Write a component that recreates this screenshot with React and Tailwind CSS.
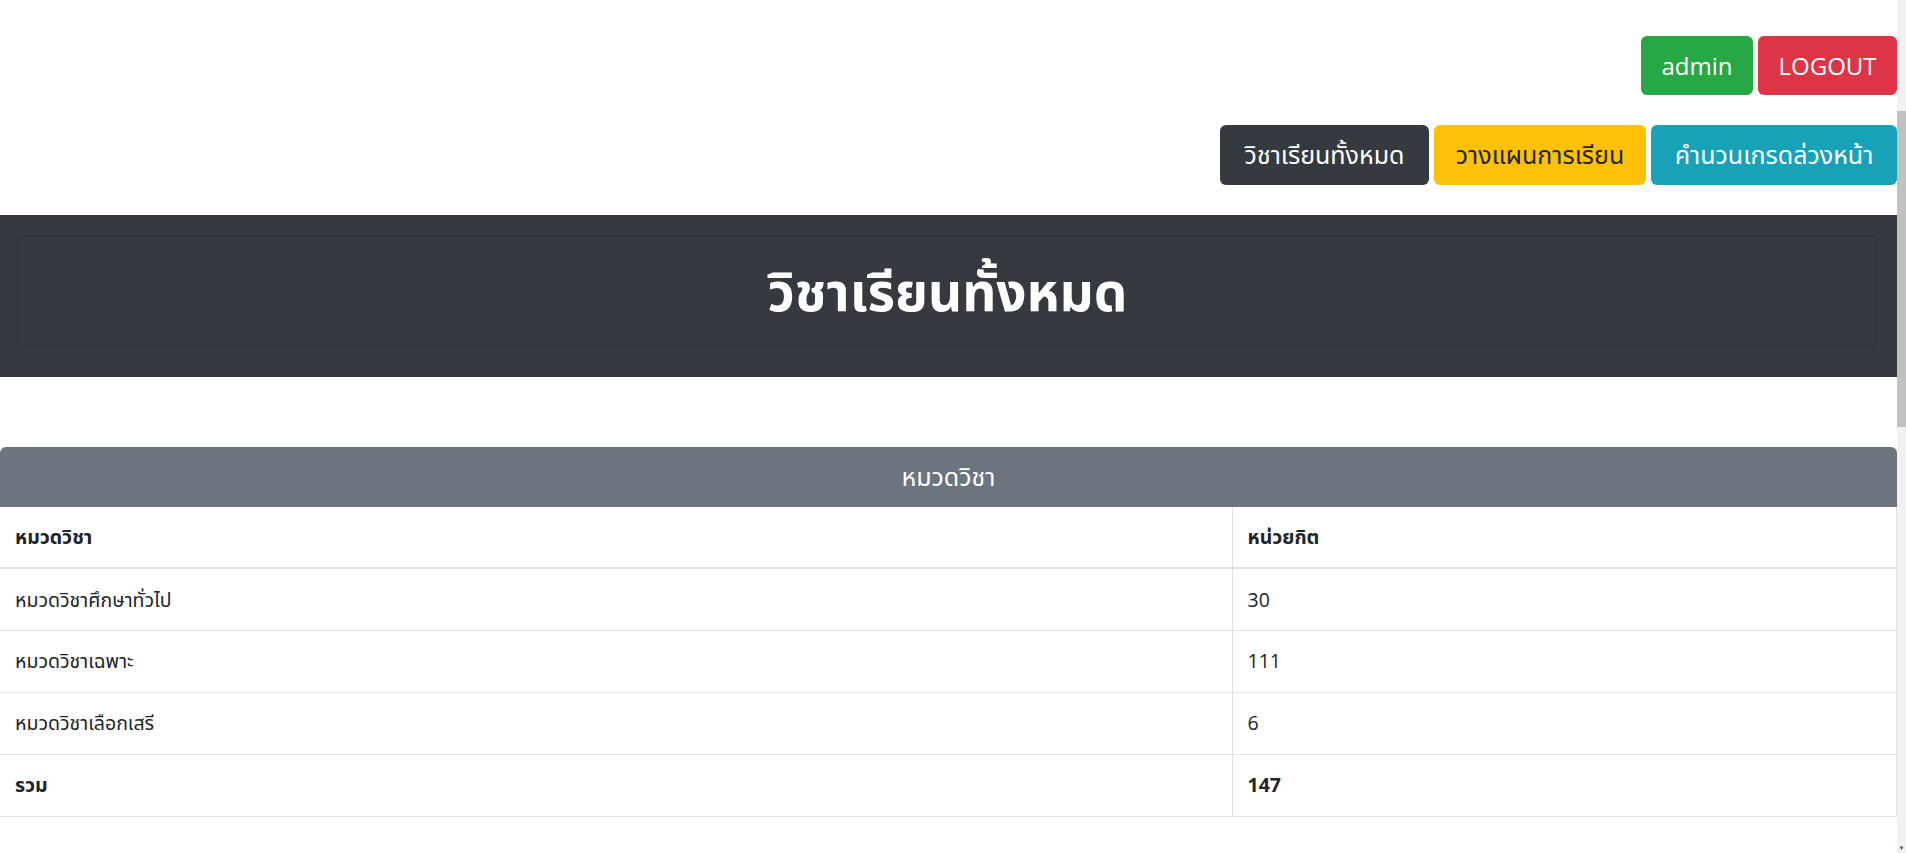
const rows = [
  { name: 'หมวดวิชาศึกษาทั่วไป', credit: '30' },
  { name: 'หมวดวิชาเฉพาะ', credit: '111' },
  { name: 'หมวดวิชาเลือกเสรี', credit: '6' },
];

const font = "font-['Open_Sans','Noto_Sans_Thai','Noto_Sans',sans-serif]";

export default function App() {
  return (
    <div className={`flex min-h-screen bg-white text-[#212529] ${font}`}>
      <div className="flex-1 min-w-0">
        {/* top user buttons */}
        <div className="flex justify-end gap-[5px] pt-[36px]">
          <button className="w-[112px] h-[59px] rounded-[6px] bg-[#28a745] text-white text-[24px]">admin</button>
          <button className="w-[139px] h-[59px] rounded-[6px] bg-[#dc3545] text-white text-[24px]">LOGOUT</button>
        </div>

        {/* navigation */}
        <div className="flex justify-end gap-[5px] mt-[30px]">
          <button className="w-[209px] h-[60px] rounded-[6px] bg-[#343a40] text-white text-[25px]">วิชาเรียนทั้งหมด</button>
          <button className="w-[212px] h-[60px] rounded-[6px] bg-[#ffc107] text-[#212529] text-[25px]">วางแผนการเรียน</button>
          <button className="w-[246px] h-[60px] rounded-[6px] bg-[#17a2b8] text-white text-[25px]">คำนวนเกรดล่วงหน้า</button>
        </div>

        {/* banner */}
        <div className="mt-[30px] bg-[#343a40] pl-[18px] pr-[20px] pt-[20px] pb-[31px]">
          <div className="h-[111px] rounded-[6px] border border-[#2d3238] flex items-center justify-center">
            <h1 className="text-white text-[53px] font-bold leading-none">วิชาเรียนทั้งหมด</h1>
          </div>
        </div>

        {/* card */}
        <div className="mt-[70px]">
          <div className="h-[60px] rounded-t-[6px] bg-[#6c757d] flex items-center justify-center text-white text-[25px]">
            หมวดวิชา
          </div>
          <table className="w-full border-collapse text-[19.5px]">
            <thead>
              <tr>
                <th className="w-[1232px] text-left font-bold px-[15px] h-[61px] border-b-2 border-r border-[#dee2e6]">หมวดวิชา</th>
                <th className="text-left font-bold px-[15px] h-[61px] border-b-2 border-r border-[#dee2e6]">หน่วยกิต</th>
              </tr>
            </thead>
            <tbody>
              {rows.map((r) => (
                <tr key={r.name}>
                  <td className="px-[15px] h-[62px] border-b border-r border-[#dee2e6]">{r.name}</td>
                  <td className="px-[15px] h-[62px] border-b border-r border-[#dee2e6]">{r.credit}</td>
                </tr>
              ))}
              <tr>
                <td className="px-[15px] h-[62px] border-b border-r border-[#dee2e6] font-bold">รวม</td>
                <td className="px-[15px] h-[62px] border-b border-r border-[#dee2e6] font-bold">147</td>
              </tr>
            </tbody>
          </table>
        </div>
      </div>

      {/* browser scrollbar */}
      <div className="w-[9px] bg-[#f1f1f1] flex flex-col">
        <div className="h-[111px]" />
        <div className="h-[316px] bg-[#c1c1c1]" />
        <div className="flex-1" />
        <div className="h-[8px] flex justify-center text-[6px] leading-none text-[#505050]">▼</div>
      </div>
    </div>
  );
}
